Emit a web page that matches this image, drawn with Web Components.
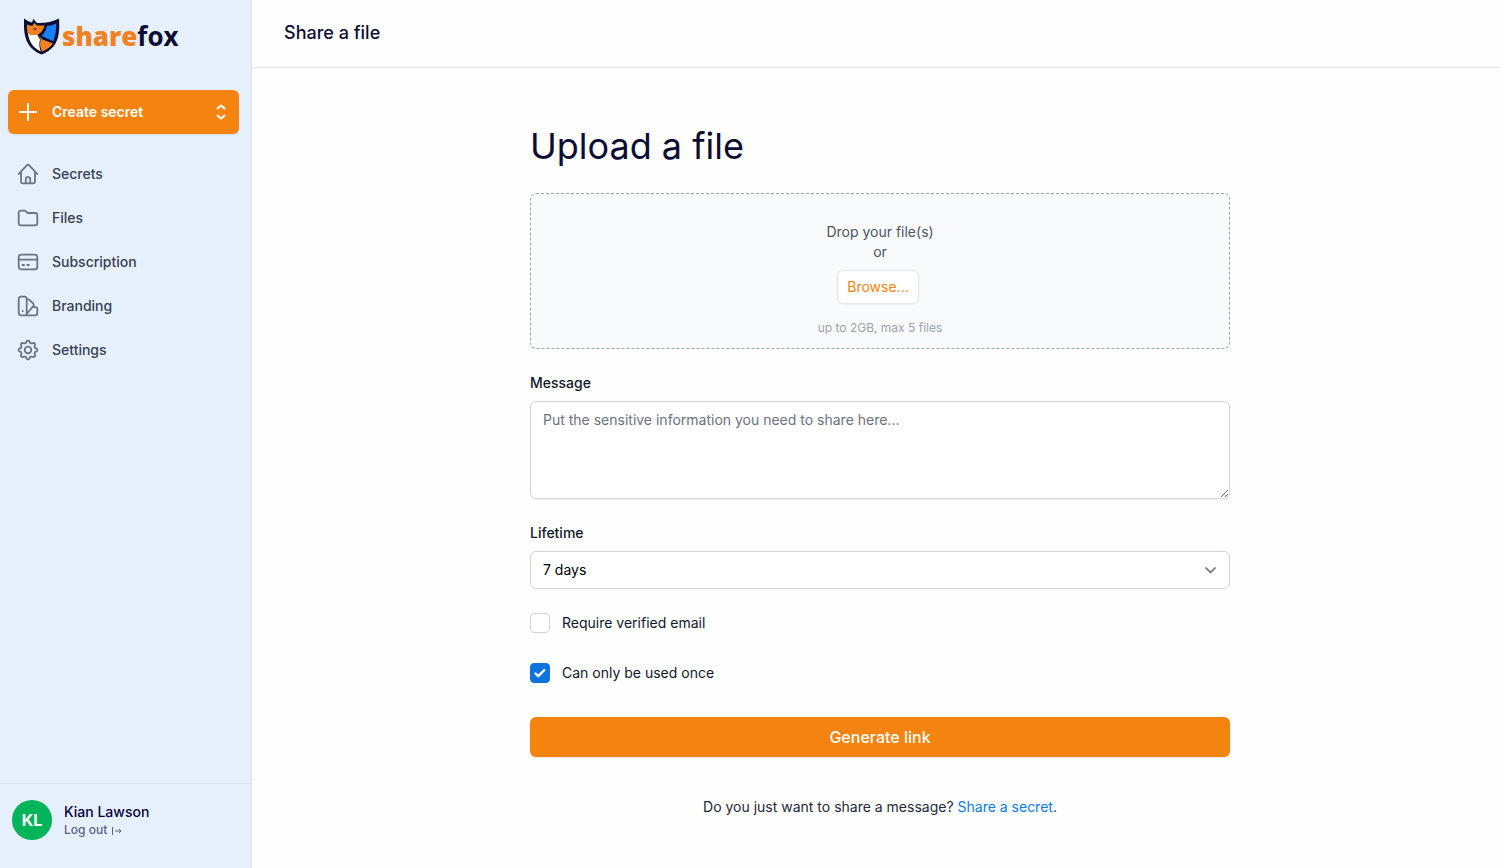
<!DOCTYPE html>
<html lang="en">
<head>
<meta charset="utf-8">
<title>Share a file</title>
<meta name="viewport" content="width=device-width, initial-scale=1">
<style>
html, body { margin: 0; min-height: 100%; }
body {
  --orange: #f48310;
  --ink: #0d0d33;
  --line: #d9e2ee;
  font-family: Inter, "Liberation Sans", sans-serif;
  font-size: 14px;
  line-height: 20px;
  color: #111827;
  background: #fefefe;
}
</style>
</head>
<body>
<sf-app>
  <sf-sidebar slot="sidebar">
    <sf-nav-item icon="home">Secrets</sf-nav-item>
    <sf-nav-item icon="folder">Files</sf-nav-item>
    <sf-nav-item icon="card">Subscription</sf-nav-item>
    <sf-nav-item icon="swatch">Branding</sf-nav-item>
    <sf-nav-item icon="gear">Settings</sf-nav-item>
    <sf-user slot="user" initials="KL">Kian Lawson</sf-user>
  </sf-sidebar>
  <sf-topbar slot="main">Share a file</sf-topbar>
  <sf-upload-form slot="main"></sf-upload-form>
</sf-app>

<script>
/* Registers an element whose shadow root is rendered when it is first connected. */
function define(name, render) {
  customElements.define(name, class extends HTMLElement {
    connectedCallback() {
      if (this.shadowRoot) return;
      this.attachShadow({ mode: 'open' }).innerHTML = '<style>*{box-sizing:border-box}</style>' + render(this);
    }
  });
}

const gear = (() => {
  const points = [];
  for (let i = 0; i <= 96; i++) {
    const a = i / 96 * Math.PI * 2;
    const wave = Math.max(-1, Math.min(1, 1.5 * Math.cos(8 * a)));
    const r = 8.3 + wave;
    points.push((12 + r * Math.sin(a)).toFixed(2) + ' ' + (12 - r * Math.cos(a)).toFixed(2));
  }
  return '<path d="M' + points.join('L') + 'Z"/><circle cx="12" cy="12" r="3.3"/>';
})();

const icons = {
  home: '<path d="M2.700 12 10.800 3.300a1.700 1.700 0 0 1 2.400 0L21.300 12M5 10v9.800a1.500 1.500 0 0 0 1.500 1.500h11a1.500 1.500 0 0 0 1.500-1.500V10M9.800 21v-4.300a1.500 1.500 0 0 1 1.500-1.500h1.400a1.500 1.500 0 0 1 1.500 1.500V21"/>',
  folder: '<path d="M4.700 4.700h4.100q.6 0 1 .5l1.300 1.300q.4.5 1 .5h7.200a2 2 0 0 1 2 2v8.300a2 2 0 0 1-2 2H4.700a2 2 0 0 1-2-2V6.700a2 2 0 0 1 2-2Z"/>',
  card: '<rect x="2.700" y="4.700" width="18.600" height="14.600" rx="2.600"/><path d="M2.700 9.700h18.600M6.500 15h1.600M11.300 15h1.600"/>',
  swatch: '<path d="M4.700 2.700h4a2 2 0 0 1 2 2v16.600H4.700a2 2 0 0 1-2-2V4.700a2 2 0 0 1 2-2ZM10.700 5.600q1.800-.6 3 .6l3.600 3.300q1 1.100.2 2.200L10.700 20M16.700 13.200h2.600a2 2 0 0 1 2 2v4.100a2 2 0 0 1-2 2h-8.600M6.700 17v.2"/>',
  gear
};

define('sf-app', () => `
<style>
  :host { display: grid; grid-template-columns: 252px minmax(0, 1fr); min-height: 100vh; }
  main { display: flex; flex-direction: column; }
</style>
<slot name="sidebar"></slot>
<main><slot name="main"></slot></main>`);

define('sf-logo', () => `
<style>
  :host { display: block; }
  a { display: flex; align-items: center; gap: 2px; text-decoration: none; color: var(--ink);
      font: 700 26px/40px "Open Sans", sans-serif; }
  svg { width: 36px; height: 40px; flex: none; }
  b { color: #f08223; }
  .word { display: flex; }
</style>
<a href="#" aria-label="sharefox">
  <svg viewBox="0 0 36 40" aria-hidden="true">
    <path fill="#0d0d33" d="M0 2.500Q4.500 6 8 6.500L9.300 3l3.700 4Q25 7.500 35 2.500C36 19 34.500 32 17.500 38.500 1.500 32-.7 19 0 2.500Z"/>
    <path fill="#f08223" d="M3 8.500Q6 10 8.500 9.500l2-2.500 2.500 2.500h7.500q-1 5-5.500 8.500l-3.500 3-8-3.500Q2.800 13 3 8.500Z"/>
    <path fill="#fff" d="M4 17.500 7 19h6.500l2.500 4.500q-1.500 6 .8 12C9 32 5 25.500 4 17.500Z"/>
    <path fill="#f08223" d="m15 20 3.500 3.500L29 27.500q-4 5.500-11 8-3-6-1.300-12Z"/>
    <path fill="#1680f8" d="M22.800 10Q28 9.500 32.300 7.500q.3 9-2.800 17.700L17.500 20q4.500-4 5.300-10Z"/>
    <path fill="#0d0d33" d="m9 12.300 3.800.6-2 1.200Z"/>
  </svg>
  <span class="word"><b>share</b><span>fox</span></span>
</a>`);

define('sf-sidebar', () => `
<style>
  :host { display: flex; flex-direction: column; background: #e6f0fd; border-right: 1px solid var(--line); }
  sf-logo { padding: 16px 24px 34px; }
  .create { display: flex; align-items: center; gap: 12px; height: 44px; margin: 0 12px 18px 8px; padding: 0 8px;
    border: 0; border-radius: 6px; background: var(--orange); color: #fff; font: 600 14px/20px Inter, sans-serif;
    box-shadow: 0 1px 2px #0000001a; text-align: left; }
  .create span { flex: 1; }
  svg { width: 24px; height: 24px; fill: none; stroke: #fff; stroke-width: 2; }
  .updown { width: 20px; height: 20px; stroke-width: 2; stroke-linecap: round; stroke-linejoin: round; }
  nav { flex: 1; display: flex; flex-direction: column; }
</style>
<sf-logo></sf-logo>
<button class="create" type="button">
  <svg viewBox="0 0 24 24" aria-hidden="true"><path d="M12 3v18M3 12h18"/></svg>
  <span>Create secret</span>
  <svg class="updown" viewBox="0 0 20 20" aria-hidden="true"><path d="m6.500 6.500 3.500-3 3.500 3M6.500 13.500l3.500 3 3.500-3"/></svg>
</button>
<nav><slot></slot></nav>
<slot name="user"></slot>`);

define('sf-nav-item', el => `
<style>
  :host { display: block; }
  a { display: flex; align-items: center; gap: 12px; height: 44px; padding: 0 16px; color: #374151; font-weight: 500; text-decoration: none; }
  svg { width: 24px; height: 24px; fill: none; stroke: #6b7280; stroke-width: 1.8; stroke-linecap: round; stroke-linejoin: round; }
</style>
<a href="#"><svg viewBox="0 0 24 24" aria-hidden="true">${icons[el.getAttribute('icon')]}</svg><slot></slot></a>`);

define('sf-user', el => `
<style>
  :host { display: flex; gap: 12px; padding: 16px 12px 28px; border-top: 1px solid var(--line); }
  .avatar { display: grid; place-items: center; width: 40px; height: 40px; border-radius: 50%; background: #00b45a; color: #fff; font-size: 16px; font-weight: 700; }
  .who { display: flex; flex-direction: column; padding-top: 2px; font-weight: 500; color: #03033a; }
  a { display: flex; align-items: center; gap: 4px; font-size: 12px; line-height: 16px; color: #5b6186; text-decoration: none; }
  svg { width: 12px; height: 10px; fill: none; stroke: currentColor; }
</style>
<span class="avatar">${el.getAttribute('initials')}</span>
<div class="who"><slot></slot>
  <a href="#">Log out <svg viewBox="0 0 12 10" aria-hidden="true"><path d="M1.500 2v8M4 6h6M8 4l2 2-2 2"/></svg></a>
</div>`);

define('sf-topbar', () => `
<style>
  :host { display: block; border-bottom: 1px solid #e5e7eb; padding: 21px 32px 22px; }
  h2 { margin: 0; font-size: 18px; line-height: 24px; font-weight: 500; color: var(--ink); }
</style>
<h2><slot></slot></h2>`);

define('sf-dropzone', () => `
<style>
  :host { display: flex; flex-direction: column; align-items: center; padding: 28px 16px 12px; border: 1px dashed #9ca3af;
    border-radius: 6px; background: #f9fafc; color: #4b5563; text-align: center; }
  button { height: 34px; margin: 8px 4px 16px 0; padding: 0 9px; border: 1px solid #e5e7eb; border-radius: 6px; background: #fff;
    color: var(--orange); font: 400 14px/20px Inter, sans-serif; box-shadow: 0 1px 2px #0000000d; }
  small { font-size: 12px; line-height: 16px; color: #9ca3af; }
</style>
<span>Drop your file(s)</span><span>or</span>
<button type="button">Browse...</button>
<small>up to 2GB, max 5 files</small>`);

define('sf-message-field', () => `
<style>
  :host { display: flex; flex-direction: column; gap: 8px; }
  label { font-weight: 500; }
  textarea { display: block; width: 100%; height: 98px; margin: 0; padding: 8px 12px; border: 1px solid #d1d5db; border-radius: 6px;
    background: #fff; color: inherit; font: 400 14px/20px Inter, sans-serif; resize: vertical; box-shadow: 0 1px 2px #0000000d; }
  textarea::placeholder { color: #6b7280; }
</style>
<label for="message">Message</label>
<textarea id="message" placeholder="Put the sensitive information you need to share here..."></textarea>`);

define('sf-lifetime-field', () => `
<style>
  :host { display: flex; flex-direction: column; gap: 8px; }
  label { font-weight: 500; }
  .box { display: grid; align-items: center; }
  .box > * { grid-area: 1 / 1; }
  select { appearance: none; width: 100%; height: 38px; margin: 0; padding: 0 40px 0 12px; border: 1px solid #d1d5db; border-radius: 6px;
    background: #fff; color: #000; font: 400 14px/20px Inter, sans-serif; }
  svg { justify-self: end; width: 20px; height: 20px; margin-right: 10px; pointer-events: none; fill: none; stroke: #6b7280; stroke-width: 1.7; stroke-linecap: round; stroke-linejoin: round; }
</style>
<label for="lifetime">Lifetime</label>
<div class="box">
  <select id="lifetime"><option>7 days</option></select>
  <svg viewBox="0 0 20 20" aria-hidden="true"><path d="m6 8 4.500 4.500L15 8"/></svg>
</div>`);

define('sf-check', el => `
<style>
  :host { display: block; }
  label { display: flex; align-items: center; gap: 12px; }
  .box { display: grid; width: 20px; height: 20px; }
  .box > * { grid-area: 1 / 1; }
  input { appearance: none; width: 20px; height: 20px; margin: 0; border: 1px solid #d1d5db; border-radius: 4px; background: #fff; }
  input:checked { border-color: #0b74de; background: #0b74de; }
  svg { width: 20px; height: 20px; pointer-events: none; visibility: hidden; fill: none; stroke: #fff; stroke-width: 2.4; stroke-linecap: round; stroke-linejoin: round; }
  input:checked + svg { visibility: visible; }
</style>
<label><span class="box"><input type="checkbox" ${el.hasAttribute('checked') ? 'checked' : ''}><svg viewBox="0 0 20 20" aria-hidden="true"><path d="m5.500 10.500 2.700 2.700 6-6"/></svg></span><slot></slot></label>`);

define('sf-upload-form', () => `
<style>
  :host { display: block; padding: 56px 32px 48px 40px; }
  form { display: flex; flex-direction: column; gap: 24px; max-width: 700px; margin: 0 auto; }
  h1 { margin: 0 0 1px; font-size: 36px; line-height: 44px; font-weight: 400; color: var(--ink); }
  .checks { display: flex; flex-direction: column; gap: 30px; margin-bottom: 10px; }
  button { height: 40px; border: 0; border-radius: 6px; background: var(--orange); color: #fff; font: 500 16px/24px Inter, sans-serif; box-shadow: 0 1px 2px #0000001a; }
  p { margin: 16px 0 0; text-align: center; color: #1f2937; }
  a { color: #0b7bea; text-decoration: none; }
</style>
<form>
  <h1>Upload a file</h1>
  <sf-dropzone></sf-dropzone>
  <sf-message-field></sf-message-field>
  <sf-lifetime-field></sf-lifetime-field>
  <div class="checks">
    <sf-check>Require verified email</sf-check>
    <sf-check checked>Can only be used once</sf-check>
  </div>
  <button type="button">Generate link</button>
  <p>Do you just want to share a message? <a href="#">Share a secret</a>.</p>
</form>`);
</script>
</body>
</html>
